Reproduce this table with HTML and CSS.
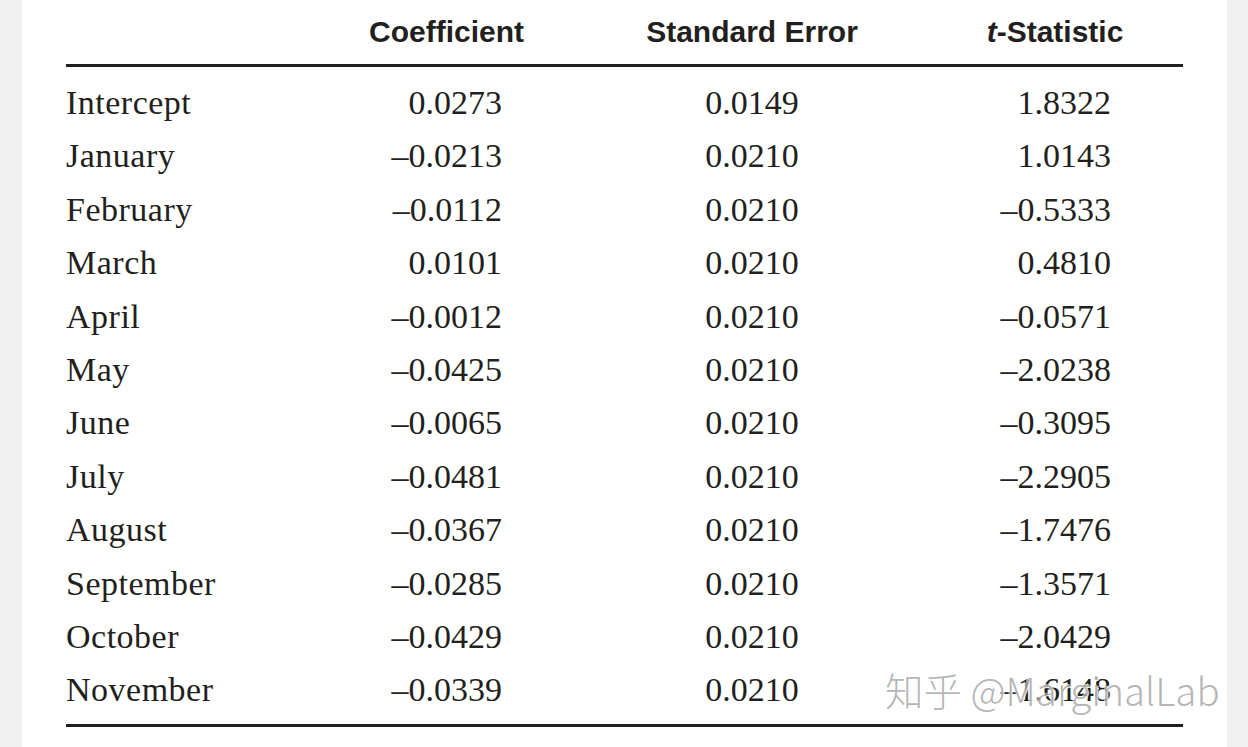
FILE: index.html
```html
<!DOCTYPE html>
<html lang="en">
<head>
<meta charset="utf-8">
<title>Regression table</title>
<link rel="stylesheet" href="styles.css">
</head>
<body>
<div class="page">
  <div class="sheet">
    <div class="table">
      <div class="row head">
        <div class="c lab"></div>
        <div class="c coef">Coefficient</div>
        <div class="c se">Standard Error</div>
        <div class="c ts"><i>t</i>-Statistic</div>
      </div>
      <div class="body">
        <div class="row"><div class="c lab">Intercept</div><div class="c coef">0.0273</div><div class="c se">0.0149</div><div class="c ts">1.8322</div></div>
        <div class="row"><div class="c lab">January</div><div class="c coef">–0.0213</div><div class="c se">0.0210</div><div class="c ts">1.0143</div></div>
        <div class="row"><div class="c lab">February</div><div class="c coef">–0.0112</div><div class="c se">0.0210</div><div class="c ts">–0.5333</div></div>
        <div class="row"><div class="c lab">March</div><div class="c coef">0.0101</div><div class="c se">0.0210</div><div class="c ts">0.4810</div></div>
        <div class="row"><div class="c lab">April</div><div class="c coef">–0.0012</div><div class="c se">0.0210</div><div class="c ts">–0.0571</div></div>
        <div class="row"><div class="c lab">May</div><div class="c coef">–0.0425</div><div class="c se">0.0210</div><div class="c ts">–2.0238</div></div>
        <div class="row"><div class="c lab">June</div><div class="c coef">–0.0065</div><div class="c se">0.0210</div><div class="c ts">–0.3095</div></div>
        <div class="row"><div class="c lab">July</div><div class="c coef">–0.0481</div><div class="c se">0.0210</div><div class="c ts">–2.2905</div></div>
        <div class="row"><div class="c lab">August</div><div class="c coef">–0.0367</div><div class="c se">0.0210</div><div class="c ts">–1.7476</div></div>
        <div class="row"><div class="c lab">September</div><div class="c coef">–0.0285</div><div class="c se">0.0210</div><div class="c ts">–1.3571</div></div>
        <div class="row"><div class="c lab">October</div><div class="c coef">–0.0429</div><div class="c se">0.0210</div><div class="c ts">–2.0429</div></div>
        <div class="row"><div class="c lab">November</div><div class="c coef">–0.0339</div><div class="c se">0.0210</div><div class="c ts">–1.6148</div></div>
      </div>
    </div>
    <div class="watermark">知乎 @MarginalLab</div>
  </div>
</div>
</body>
</html>
```

FILE: styles.css
```css
* { box-sizing: border-box; }
html, body {
  margin: 0;
  padding: 0;
  background: #f1f1f1;
  height: 100%;
  overflow: hidden;
}
.page {
  height: 747px;
  padding-left: 22px;
}
.sheet {
  position: relative;
  width: 1205px;
  height: 747px;
  background: #ffffff;
  padding-left: 44px;
}
.table {
  width: 1117px;
  color: #231f20;
}
.row {
  display: grid;
  grid-template-columns: 236px 289px 322px 270px;
}
.head {
  height: 67px;
  border-bottom: 3px solid #231f20;
  font-family: "Liberation Sans", Arial, sans-serif;
  font-weight: 700;
  font-size: 30px;
  line-height: 64px;
}
.head .c { text-align: center; }
.head .ts { padding-left: 14px; }
.body {
  padding-top: 9px;
  padding-bottom: 7px;
  border-bottom: 3px solid #231f20;
  font-family: "Liberation Serif", "Times New Roman", serif;
  font-size: 34px;
  line-height: 53.4px;
}
.body .lab { text-align: left; letter-spacing: 0.5px; }
.body .coef { text-align: right; padding-right: 89px; }
.body .se { text-align: center; }
.body .ts { text-align: right; padding-right: 72px; }
.c { white-space: nowrap; }
.watermark {
  position: absolute;
  left: 863px;
  top: 665px;
  font-family: "Noto Sans CJK SC", "Noto Sans", sans-serif;
  font-weight: 300;
  font-size: 38.5px;
  line-height: 48px;
  color: rgba(150, 150, 150, 0.7);
  text-shadow: 1px 1px 0 rgba(255,255,255,0.9), -1px -1px 0 rgba(255,255,255,0.6);
  white-space: nowrap;
  pointer-events: none;
}
```
